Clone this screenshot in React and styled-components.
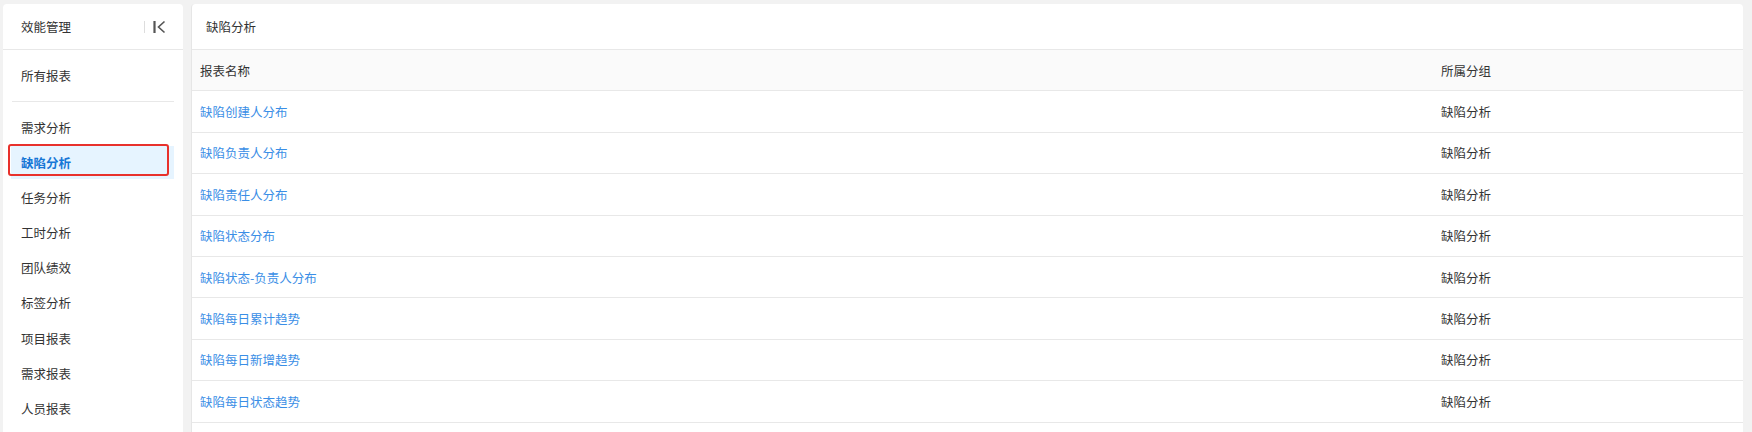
import React from 'react';
import styled, {createGlobalStyle} from "styled-components"

const GlobalStyle = createGlobalStyle`
  body {
    margin: 0;
    background: #f2f2f2;
    font-family: "Noto Sans CJK SC", "Liberation Sans", sans-serif;
    font-size: 12.5px;
    color: #333;
  }
`
const Page = styled.div`
  display: flex;
  gap: 8px;
  padding: 4px 9px 0 3px;
  height: 432px;
  box-sizing: border-box;
  overflow: hidden;
`
const Sidebar = styled.div`
  width: 180px;
  flex-shrink: 0;
  background: #fff;
  border-radius: 4px 4px 0 0;
`
const SideHeader = styled.div`
  height: 45px;
  display: flex;
  align-items: center;
  justify-content: space-between;
  padding: 0 17px 0 18px;
  border-bottom: 1px solid #e8e8e8;
`
const Collapse = styled.div`
  display: flex;
  align-items: center;
  gap: 8px;
`
const Sep = styled.span`
  width: 1px;
  height: 12px;
  background: #ddd;
`
const AllReports = styled.div`
  height: 51px;
  display: flex;
  align-items: center;
  padding-left: 18px;
`
const Divider = styled.div`
  height: 1px;
  margin: 0 9px;
  background: #e8e8e8;
`
const Menu = styled.div`
  padding-top: 8.5px;
`
const MenuItem = styled.div`
  position: relative;
  height: 33px;
  margin: 0 9px 2.2px 8px;
  padding-left: 10px;
  display: flex;
  align-items: center;
  background: ${p => p.$active ? "#e6f4ff" : "transparent"};
  color: ${p => p.$active ? "#1677d6" : "#333"};
  font-weight: ${p => p.$active ? 700 : 400};
`
const Mark = styled.span`
  position: absolute;
  left: -3px;
  top: -2px;
  width: 161px;
  height: 32px;
  border: 2px solid #e8312c;
  border-radius: 3px;
  box-sizing: border-box;
`
const Main = styled.div`
  flex: 1;
  background: #fff;
  border-radius: 4px 4px 0 0;
  border-left: 1px solid #e6e6e6;
`
const MainHeader = styled.div`
  height: 45px;
  display: flex;
  align-items: center;
  padding-left: 14px;
  border-bottom: 1px solid #e8e8e8;
`
const Table = styled.div`
  display: grid;
  grid-template-columns: 1241px 1fr;
`
const Cell = styled.div`
  height: 41.4px;
  box-sizing: border-box;
  display: flex;
  align-items: center;
  padding-left: 8px;
  border-bottom: 1px solid #e8e8e8;
  background: ${p => p.$head ? "#fafafa" : "#fff"};
  color: ${p => p.$link ? "#3a8ee6" : "#333"};
`

const menu = ["需求分析", "缺陷分析", "任务分析", "工时分析", "团队绩效", "标签分析", "项目报表", "需求报表", "人员报表"]
const rows = ["缺陷创建人分布", "缺陷负责人分布", "缺陷责任人分布", "缺陷状态分布", "缺陷状态-负责人分布", "缺陷每日累计趋势", "缺陷每日新增趋势", "缺陷每日状态趋势"]

const App = () => {
    return (
        <Page>
            <GlobalStyle/>
            <Sidebar>
                <SideHeader>
                    <span>效能管理</span>
                    <Collapse>
                        <Sep/>
                        <svg width="13" height="14" viewBox="0 0 13 14">
                            <path d="M1.5 1v12" stroke="#555" strokeWidth="2.2" fill="none"/>
                            <path d="M11.5 1.5L5.5 7l6 5.5" stroke="#555" strokeWidth="1.6" fill="none"/>
                        </svg>
                    </Collapse>
                </SideHeader>
                <AllReports>所有报表</AllReports>
                <Divider/>
                <Menu>
                    {menu.map(m => (
                        <MenuItem key={m} $active={m === "缺陷分析"}>
                            {m}
                            {m === "缺陷分析" && <Mark/>}
                        </MenuItem>
                    ))}
                </Menu>
            </Sidebar>
            <Main>
                <MainHeader>缺陷分析</MainHeader>
                <Table>
                    <Cell $head>报表名称</Cell>
                    <Cell $head>所属分组</Cell>
                    {rows.map(r => (
                        <React.Fragment key={r}>
                            <Cell $link>{r}</Cell>
                            <Cell>缺陷分析</Cell>
                        </React.Fragment>
                    ))}
                </Table>
            </Main>
        </Page>
    );
};

export default App;
